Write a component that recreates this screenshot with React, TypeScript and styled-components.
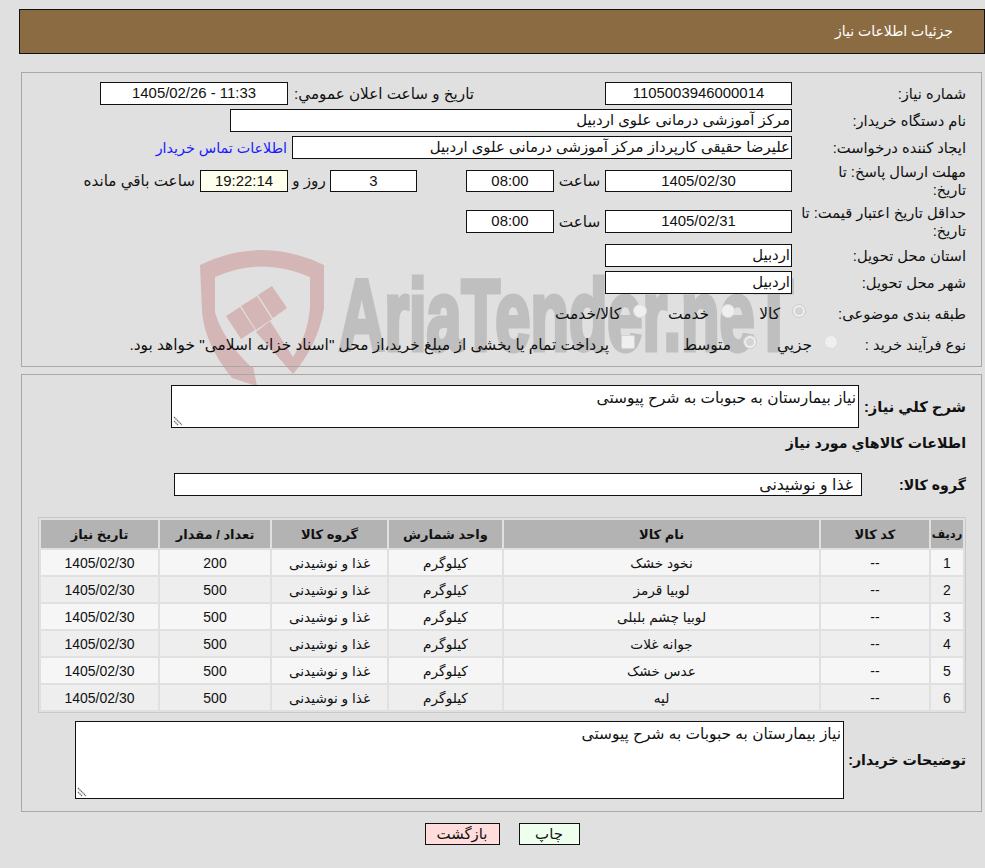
import React from 'react';
import styled, { createGlobalStyle } from 'styled-components';

const GlobalStyle = createGlobalStyle`
  html, body {
    margin: 0;
    padding: 0;
    background: #e0e0e0;
  }
  body {
    font-family: "Liberation Sans", "DejaVu Sans", sans-serif;
    font-size: 14.7px;
    color: #111;
  }
`;

const Page = styled.div`
  position: relative;
  width: 985px;
  height: 868px;
  overflow: hidden;
  direction: rtl;
  box-sizing: border-box;
  padding: 9px 0 0 19px;
`;

const Content = styled.div`
  position: relative;
  z-index: 1;
`;

const TitleBar = styled.div`
  box-sizing: border-box;
  width: 966px;
  height: 45px;
  background: #8b6b41;
  border: 1px solid #111;
  color: #fff;
  font-size: 14px;
  line-height: 43px;
  padding-right: 31px;
`;

const Panel = styled.section`
  box-sizing: border-box;
  width: 961px;
  margin-right: 3px;
  border: 1px solid #a8a8a8;
`;

const InfoPanel = styled(Panel)`
  height: 295px;
  margin-top: 18px;
  padding-top: 9px;
`;

const DetailPanel = styled(Panel)`
  height: 438px;
  margin-top: 7px;
  padding-top: 10px;
`;

const Row = styled.div<{ $h: number; $mb?: number }>`
  display: flex;
  align-items: center;
  height: ${(p) => p.$h}px;
  margin-bottom: ${(p) => p.$mb ?? 4}px;
`;

const Label = styled.label<{ $w?: number }>`
  width: ${(p) => p.$w ?? 189}px;
  flex: none;
  padding-right: 15px;
  padding-left: 3px;
  box-sizing: border-box;
  line-height: 18px;
`;

const Spacer = styled.div<{ $w: number }>`
  flex: none;
  width: ${(p) => p.$w}px;
`;

const Field = styled.div<{ $w: number; $align?: string; $tint?: boolean; $h?: number; $pad?: number; $fs?: number }>`
  box-sizing: border-box;
  flex: none;
  width: ${(p) => p.$w}px;
  height: ${(p) => p.$h ?? 23}px;
  line-height: ${(p) => (p.$h ?? 23) - 2}px;
  background: ${(p) => (p.$tint ? '#ffffee' : '#fff')};
  border: 1px solid #111;
  text-align: ${(p) => p.$align ?? 'center'};
  padding: 0 ${(p) => p.$pad ?? 1}px;
  font-size: ${(p) => p.$fs ?? 14.9}px;
  white-space: nowrap;
  overflow: hidden;
`;

const Inline = styled.span<{ $w: number; $align?: string; $pad?: number }>`
  flex: none;
  box-sizing: border-box;
  width: ${(p) => p.$w}px;
  padding-right: ${(p) => p.$pad ?? 0}px;
  text-align: ${(p) => p.$align ?? 'center'};
  font-size: 15.2px;
  white-space: nowrap;
`;

const ContactLink = styled.a`
  color: #1a1aff;
  margin-right: 5px;
  font-size: 14.3px;
  white-space: nowrap;
`;

const Choice = styled.span<{ $w: number }>`
  display: flex;
  align-items: center;
  flex: none;
  width: ${(p) => p.$w}px;
  gap: 12px;
  font-size: 15.4px;
  white-space: nowrap;
`;

const Radio = styled.i<{ $on?: boolean }>`
  flex: none;
  position: relative;
  top: -3px;
  box-sizing: border-box;
  width: 14px;
  height: 14px;
  border-radius: 50%;
  background: ${(p) => (p.$on ? '#d4d4d4' : '#efefef')};
  border: ${(p) => (p.$on ? '1px solid #cfcfcf' : '1px solid #dcdcdc')};
  box-shadow: ${(p) => (p.$on ? 'inset 0 0 0 2px #f0f0f0' : 'none')};
`;

const CheckBox = styled.i`
  flex: none;
  position: relative;
  top: -3px;
  box-sizing: border-box;
  width: 14px;
  height: 14px;
  border: 1px solid #d4d4d4;
  background: #efefef;
  border-radius: 2px;
`;

const BoldLabel = styled.h3<{ $w?: number; $fs?: number }>`
  flex: none;
  margin: 0;
  width: ${(p) => (p.$w ? `${p.$w}px` : 'auto')};
  font-size: ${(p) => p.$fs ?? 14.2}px;
  font-weight: bold;
  white-space: nowrap;
`;

const DescRow = styled.div<{ $mt?: number }>`
  display: flex;
  align-items: center;
  padding-right: 15px;
  margin-top: ${(p) => p.$mt ?? 0}px;
`;

const TextBox = styled.div<{ $w: number; $h: number }>`
  position: relative;
  box-sizing: border-box;
  flex: none;
  width: ${(p) => p.$w}px;
  height: ${(p) => p.$h}px;
  background: #fff;
  border: 1px solid #111;
  padding: 3px 2px;
  font-size: 15.4px;
  line-height: 17px;
`;

const Grip = styled.svg`
  position: absolute;
  left: 1px;
  bottom: 1px;
`;

const SectionTitle = styled(BoldLabel)`
  box-sizing: border-box;
  width: auto;
  height: 45px;
  padding: 6px 15px 0 0;
  line-height: 18px;
`;

const Table = styled.table`
  width: 928px;
  margin: 21px 15px 0 0;
  border-collapse: separate;
  border-spacing: 2px;
  border: 1px solid #c9c9c9;
  table-layout: fixed;
`;

const Th = styled.th<{ $w: number; $fs?: number }>`
  width: ${(p) => p.$w}px;
  height: 28px;
  padding: 0;
  background: #b3b3b3;
  font-size: ${(p) => p.$fs ?? 13}px;
  font-weight: bold;
  text-align: center;
  white-space: nowrap;
`;

const Td = styled.td<{ $odd: boolean }>`
  height: 25px;
  padding: 0;
  background: ${(p) => (p.$odd ? '#f6f6f6' : '#eeeeee')};
  font-size: 13.7px;
  text-align: center;
  white-space: nowrap;
`;

const NumTd = styled(Td)`
  font-size: 14px;
`;

const Actions = styled.div`
  display: flex;
  justify-content: center;
  gap: 19px;
  width: 966px;
  margin-top: 11px;
`;

const ActionButton = styled.button<{ $bg: string; $w: number }>`
  box-sizing: border-box;
  width: ${(p) => p.$w}px;
  height: 22px;
  padding: 0;
  background: ${(p) => p.$bg};
  border: 1px solid #111;
  font: 14.9px "Liberation Sans", "DejaVu Sans", sans-serif;
  color: #111;
`;

const Watermark = styled.div`
  position: absolute;
  left: 198px;
  top: 248px;
  width: 620px;
  height: 140px;
  direction: ltr;
  pointer-events: none;
`;

const WatermarkText = styled.span`
  position: absolute;
  left: 141px;
  top: 17px;
  font-family: "Liberation Sans", sans-serif;
  font-size: 100px;
  font-weight: bold;
  line-height: 100px;
  color: #bfbfbf;
  -webkit-text-stroke: 5px #bfbfbf;
  white-space: nowrap;
  transform: scaleX(0.63);
  transform-origin: left center;
`;

const Shield = styled.svg`
  position: absolute;
  left: 0;
  top: 0;
`;

const items = [
  { id: 1, name: 'نخود خشک', qty: 200 },
  { id: 2, name: 'لوبیا قرمز', qty: 500 },
  { id: 3, name: 'لوبیا چشم بلبلی', qty: 500 },
  { id: 4, name: 'جوانه غلات', qty: 500 },
  { id: 5, name: 'عدس خشک', qty: 500 },
  { id: 6, name: 'لپه', qty: 500 },
];

const GripIcon = () => (
  <Grip width="11" height="11" viewBox="0 0 11 11">
    <path d="M1 2l8 8M1 6l4 4" stroke="#666" strokeWidth="1.2" strokeDasharray="1.5 .6" fill="none" />
  </Grip>
);

const App: React.FC = () => (
  <Page>
    <GlobalStyle />
    <Watermark>
      <Shield width="130" height="140" viewBox="198 248 130 140">
        <path
          d="M200 265 Q262 235 324 265 L324 308 Q318 345 293 374 L256 332 L270 321 L293 357 Q308 335 310 308 L310 277 Q262 256 215 277 L215 312 Q222 338 250 366 L253 366 L257 386 L232 378 Q205 345 202 312 Z"
          fill="#d5b6b6"
        />
        <path
          d="M226 316 L240 307 L255 330 L241 339 Z M241 306 L257 296 L272 319 L256 330 Z M258 295 L272 286 L287 308 L273 318 Z"
          fill="#d5b6b6"
        />
      </Shield>
      <WatermarkText>AriaTender.neT</WatermarkText>
    </Watermark>

    <Content>
      <TitleBar>جزئیات اطلاعات نیاز</TitleBar>

      <InfoPanel>
        <Row $h={23}>
          <Label>شماره نیاز:</Label>
          <Field $w={187}>1105003946000014</Field>
          <Spacer $w={131} />
          <Inline $w={186} $align="right">تاریخ و ساعت اعلان عمومي:</Inline>
          <Field $w={188}>11:33 - 1405/02/26</Field>
        </Row>
        <Row $h={23}>
          <Label>نام دستگاه خریدار:</Label>
          <Field $w={562} $align="right">مرکز آموزشی درمانی علوی اردبیل</Field>
        </Row>
        <Row $h={23}>
          <Label>ایجاد کننده درخواست:</Label>
          <Field $w={500} $align="right">علیرضا حقیقی کارپرداز مرکز آموزشی درمانی علوی اردبیل</Field>
          <ContactLink>اطلاعات تماس خریدار</ContactLink>
        </Row>
        <Row $h={36} $mb={5}>
          <Label>مهلت ارسال پاسخ: تا<br />تاریخ:</Label>
          <Field $w={187} $h={22}>1405/02/30</Field>
          <Inline $w={51}>ساعت</Inline>
          <Field $w={88} $h={22}>08:00</Field>
          <Spacer $w={49} />
          <Field $w={87} $h={22}>3</Field>
          <Inline $w={42}>روز و</Inline>
          <Field $w={88} $h={22} $tint>19:22:14</Field>
          <Inline $w={118} $align="right" $pad={5}>ساعت باقي مانده</Inline>
        </Row>
        <Row $h={35} $mb={5}>
          <Label>حداقل تاریخ اعتبار قیمت: تا<br />تاریخ:</Label>
          <Field $w={187}>1405/02/31</Field>
          <Inline $w={51}>ساعت</Inline>
          <Field $w={88}>08:00</Field>
        </Row>
        <Row $h={23}>
          <Label>استان محل تحویل:</Label>
          <Field $w={187} $align="right">اردبیل</Field>
        </Row>
        <Row $h={23}>
          <Label>شهر محل تحویل:</Label>
          <Field $w={187} $align="right">اردبیل</Field>
        </Row>
        <Row $h={32} $mb={0}>
          <Label $w={175}>طبقه بندی موضوعی:</Label>
          <Choice $w={71}><Radio $on />کالا</Choice>
          <Choice $w={88}><Radio />خدمت</Choice>
          <Choice $w={120}><Radio />کالا/خدمت</Choice>
        </Row>
        <Row $h={30} $mb={0}>
          <Label $w={143}>نوع فرآیند خرید :</Label>
          <Choice $w={81}><Radio />جزیي</Choice>
          <Choice $w={122}><Radio $on />متوسط</Choice>
          <Choice $w={500}><CheckBox />پرداخت تمام یا بخشی از مبلغ خرید،از محل "اسناد خزانه اسلامی" خواهد بود.</Choice>
        </Row>
      </InfoPanel>

      <DetailPanel>
        <DescRow>
          <BoldLabel $w={107} $fs={14.7}>شرح کلي نیاز:</BoldLabel>
          <TextBox $w={688} $h={43}>
            نیاز بیمارستان به حبوبات به شرح پیوستی
            <GripIcon />
          </TextBox>
        </DescRow>
        <SectionTitle>اطلاعات کالاهاي مورد نیاز</SectionTitle>
        <DescRow>
          <BoldLabel $w={104}>گروه کالا:</BoldLabel>
          <Field $w={688} $align="right" $pad={8} $fs={15.8}>غذا و نوشیدنی</Field>
        </DescRow>
        <Table>
          <thead>
            <tr>
              <Th $w={32} $fs={11.5}>ردیف</Th>
              <Th $w={108}>کد کالا</Th>
              <Th $w={315}>نام کالا</Th>
              <Th $w={113}>واحد شمارش</Th>
              <Th $w={115}>گروه کالا</Th>
              <Th $w={110}>تعداد / مقدار</Th>
              <Th $w={117}>تاریخ نیاز</Th>
            </tr>
          </thead>
          <tbody>
            {items.map((it) => (
              <tr key={it.id}>
                <NumTd $odd={it.id % 2 === 1}>{it.id}</NumTd>
                <NumTd $odd={it.id % 2 === 1}>--</NumTd>
                <Td $odd={it.id % 2 === 1}>{it.name}</Td>
                <Td $odd={it.id % 2 === 1}>کیلوگرم</Td>
                <Td $odd={it.id % 2 === 1}>غذا و نوشیدنی</Td>
                <NumTd $odd={it.id % 2 === 1}>{it.qty}</NumTd>
                <NumTd $odd={it.id % 2 === 1}>1405/02/30</NumTd>
              </tr>
            ))}
          </tbody>
        </Table>
        <DescRow $mt={8}>
          <BoldLabel $w={122}>توضیحات خریدار:</BoldLabel>
          <TextBox $w={769} $h={78}>
            نیاز بیمارستان به حبوبات به شرح پیوستی
            <GripIcon />
          </TextBox>
        </DescRow>
      </DetailPanel>

      <Actions>
        <ActionButton $bg="#eeffee" $w={61}>چاپ</ActionButton>
        <ActionButton $bg="#ffdddd" $w={75}>بازگشت</ActionButton>
      </Actions>
    </Content>
  </Page>
);

export default App;
